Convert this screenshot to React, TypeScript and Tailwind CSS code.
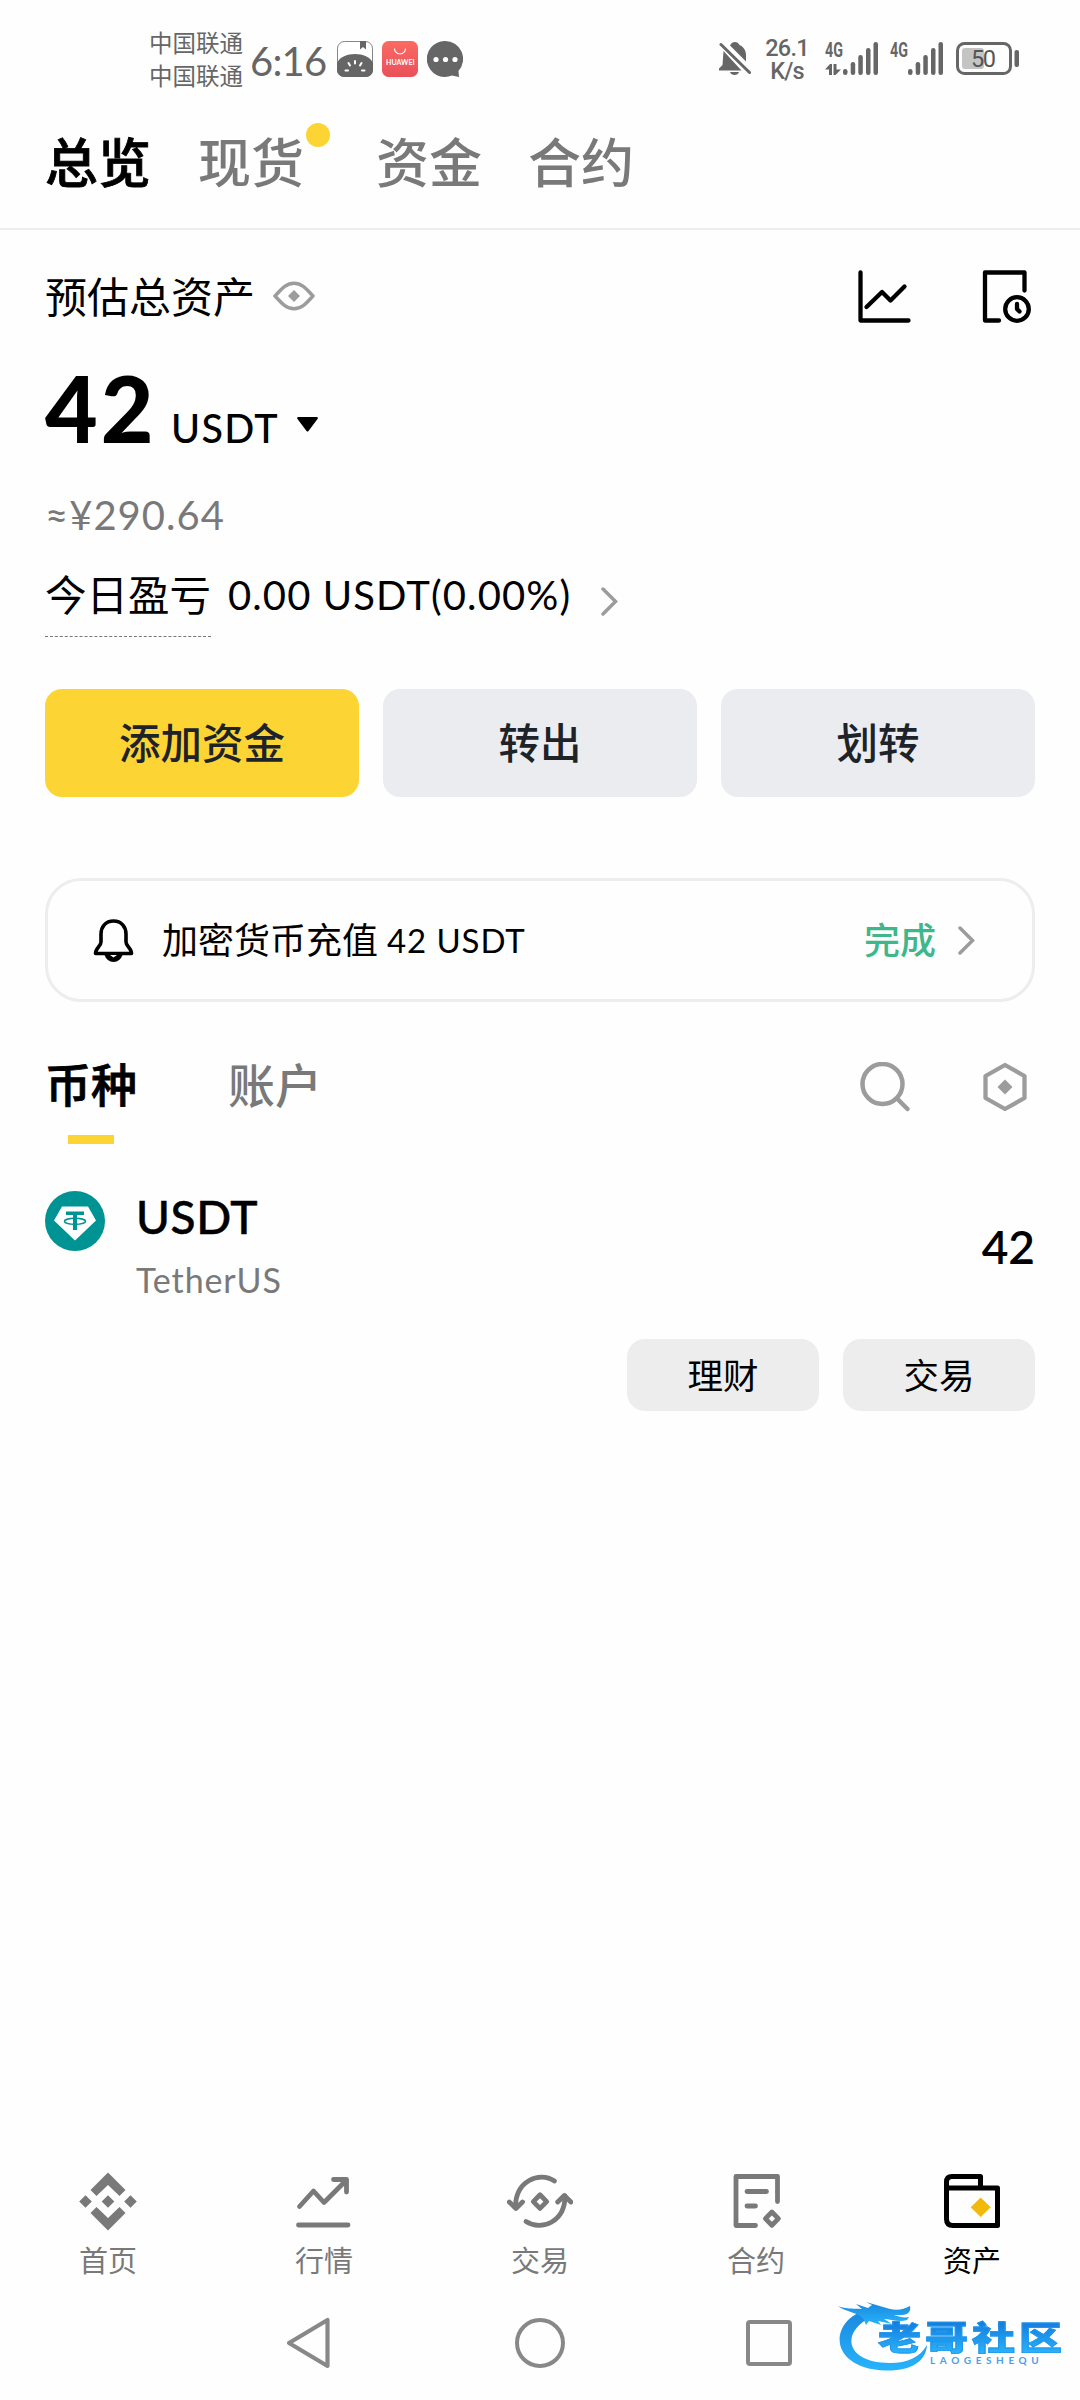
import React from "react";

type TabItem = {
  label: string;
  className: string;
  dot?: boolean;
};

type NavItem = {
  label: string;
  icon: React.ReactNode;
  active?: boolean;
};

type SignalProps = {
  transfer?: boolean;
};

const topTabs: TabItem[] = [
  { label: "总览", className: "text-black font-medium [-webkit-text-stroke:0.8px_#000]" },
  { label: "现货", className: "ml-[47px] text-[#797979] font-medium", dot: true },
  { label: "资金", className: "ml-[72px] text-[#797979] font-medium" },
  { label: "合约", className: "ml-[46px] text-[#797979] font-medium" },
];

const Signal = ({ transfer }: SignalProps) => (
  <svg className="overflow-visible" width="53" height="33" viewBox="0 0 53 33" fill="#666">
    <text
      x="0"
      y="15"
      fontSize="20"
      fontWeight="700"
      fontFamily="Roboto, sans-serif"
      textLength="18"
      lengthAdjust="spacingAndGlyphs"
    >
      4G
    </text>
    {transfer && (
      <path d="M0 27.500 L5 22 H7 V33 H4 V27.500 Z M8.500 22 H11.500 V27.500 H16 L10.500 33 H8.500 Z" />
    )}
    <rect x="18" y="27" width="4.500" height="6" rx="2.200" />
    <rect x="25.700" y="20" width="4.500" height="13" rx="2.200" />
    <rect x="33.300" y="13" width="4.500" height="20" rx="2.200" />
    <rect x="41" y="6" width="4.500" height="27" rx="2.200" />
    <rect x="48.500" y="0" width="4.500" height="33" rx="2.200" />
  </svg>
);

const StatusBar = () => (
  <div className="flex h-[115px] pl-[149px] text-[#666]">
    <div className="pt-[27px] text-[23.5px] leading-[33px]">
      <div>中国联通</div>
      <div>中国联通</div>
    </div>
    <div className="ml-[7px] w-[80px] pt-[41px] text-[40px] leading-[40px] tracking-[-0.800px]">
      6:16
    </div>
    <div className="mt-[41px] ml-[7px] flex gap-[9px]">
      {/* Reader app */}
      <svg width="36" height="36" viewBox="0 0 36 36">
        <rect x="0.500" y="0.500" width="35" height="35" rx="7" fill="#fff" stroke="#777" strokeWidth="0.900" />
        <path d="M23 0 H29 V8.500 L26 6 L23 8.500 Z" fill="#666" />
        <path d="M0 22 C5 10 31 10 36 22 V29 A7 7 0 0 1 29 36 H7 A7 7 0 0 1 0 29 Z" fill="#666" />
        <path
          d="M18 20 V22.500 M11.500 22 L13 24.500 M24.500 22 L23 24.500 M8.500 29.500 H11 M25 29.500 H27.500"
          stroke="#fff"
          strokeWidth="2"
          strokeLinecap="round"
        />
      </svg>
      {/* Huawei store */}
      <svg width="36" height="36" viewBox="0 0 36 36">
        <defs>
          <linearGradient id="store" x1="0" y1="0" x2="0" y2="1">
            <stop offset="0" stopColor="#fb6a62" />
            <stop offset="1" stopColor="#e9505a" />
          </linearGradient>
        </defs>
        <rect width="36" height="36" rx="6.500" fill="url(#store)" />
        <path d="M12.500 7.500 A5.500 5.500 0 0 0 23.500 7.500" fill="none" stroke="#fff" strokeWidth="1.200" />
        <text
          x="4"
          y="24"
          fill="#fff"
          fontSize="7"
          fontWeight="700"
          fontFamily="Lato, sans-serif"
          textLength="28.500"
        >
          HUAWEI
        </text>
      </svg>
      {/* Messages */}
      <svg width="36" height="36" viewBox="0 0 36 36">
        <path d="M18 0 A18 18 0 1 0 25 34.500 L32 36 L31.500 30 A18 18 0 0 0 18 0 Z" fill="#666" />
        <circle cx="9" cy="18.500" r="2.600" fill="#fff" />
        <circle cx="18.500" cy="18.500" r="2.600" fill="#fff" />
        <circle cx="28" cy="18.500" r="2.600" fill="#fff" />
      </svg>
    </div>
    <div className="mr-[61px] ml-auto flex pt-[42px]">
      <svg width="32" height="33" viewBox="0 0 32 33" fill="#666">
        <path d="M11 3.500 C12 1 14 0 16 0 C18 0 19.500 1 20.500 3 C25 5 27 9 27 13 V19.500 Z" />
        <path d="M4.500 9 L22.500 28.500 H0 V26.500 L3.500 23 Z" />
        <path d="M11 30 H20 C19 34 12 34 11 30 Z" />
        <path d="M2 2.500 L30.500 30.500" stroke="#666" strokeWidth="3" strokeLinecap="round" />
      </svg>
      <div className="-mt-[5px] ml-[12px] w-[48px] text-center font-['Roboto',sans-serif] text-[23.500px] leading-[23px] font-medium tracking-[-0.800px]">
        <div>26.1</div>
        <div>K/s</div>
      </div>
      <div className="ml-[14px]">
        <Signal transfer />
      </div>
      <div className="ml-[12px]">
        <Signal />
      </div>
      <svg className="ml-[13px]" width="63" height="33" viewBox="0 0 63 33">
        <rect x="6" y="6" width="22" height="21" rx="3" fill="#c4c4c4" />
        <rect x="1.500" y="1.500" width="53" height="30" rx="7" fill="none" stroke="#666" strokeWidth="3" />
        <rect x="58.500" y="8" width="4.500" height="17" rx="2" fill="#666" />
        <text x="15" y="25" fill="#555" fontSize="23.500" fontFamily="Roboto, sans-serif" textLength="25">
          50
        </text>
      </svg>
    </div>
  </div>
);

const Chevron = ({ className }: { className?: string }) => (
  <svg className={className} width="17" height="29" viewBox="0 0 17 29" fill="none">
    <path d="M2 2 L14.500 14.500 L2 27" stroke="#9c9c9c" strokeWidth="3.500" strokeLinecap="round" />
  </svg>
);

const Overview = () => (
  <>
    <div className="flex h-[132px] items-center">
      <span className="w-[208px] pt-[1px] text-[42px] leading-none whitespace-nowrap">预估总资产</span>
      <svg className="ml-[20px]" width="42" height="30" viewBox="0 0 42 30" fill="none">
        <path
          d="M2 15 C7 10 12 2.200 21 2.200 C30 2.200 35 10 40 15 C35 20 30 27.800 21 27.800 C12 27.800 7 20 2 15 Z"
          stroke="#9c9c9c"
          strokeWidth="3.500"
          strokeLinejoin="round"
        />
        <path d="M21 9 L27 15 L21 21 L15 15 Z" fill="#9c9c9c" />
      </svg>
      <svg className="ml-auto" width="53" height="53" viewBox="0 0 53 53" fill="none" stroke="#000" strokeWidth="4.300" strokeLinecap="round" strokeLinejoin="round">
        <path d="M2.500 2.500 V50.500 H50.500" />
        <path d="M8.500 37 L24 22 L32.500 30.500 L46.500 16.500" />
      </svg>
      <svg className="mr-[3px] ml-[71px]" width="50" height="53" viewBox="0 0 50 53" fill="none" stroke="#000" strokeWidth="4.300" strokeLinecap="round" strokeLinejoin="round">
        <path d="M42.500 20.500 V2.500 H3 V50.500 H17" />
        <circle cx="35" cy="39" r="11.800" />
        <path d="M35 34 V39 L37.500 41.500" />
      </svg>
    </div>

    <div className="flex items-baseline leading-none">
      <span className="w-[106px] text-[91px] font-black tracking-[3px] whitespace-nowrap">42</span>
      <span className="ml-[18px] w-[108px] pl-[2px] text-[39.500px] font-medium tracking-[1.300px]">USDT</span>
      <svg className="ml-[20px] -translate-y-[11px]" width="21" height="15" viewBox="0 0 21 15">
        <path d="M1 0 H20 Q21.500 0.500 20.500 2 L11.500 14 Q10.500 15 9.500 14 L0.500 2 Q-0.500 0.500 1 0 Z" />
      </svg>
    </div>

    <div className="mt-[42px] text-[40px] leading-[40px] tracking-[1px] text-[#797979]">≈¥290.64</div>

    <div className="mt-[38px] flex h-[64px] text-[41.500px] leading-[45px]">
      <span className="h-[64px] border-b border-dashed border-[#777]">今日盈亏</span>
      <span className="ml-[17px] text-[40px] tracking-[1.100px]">0.00 USDT(0.00%)</span>
      <Chevron className="mt-[14px] ml-[30px]" />
    </div>
  </>
);

const Actions = () => (
  <div className="mt-[52px] grid grid-cols-3 gap-[24px] text-[41.500px] font-medium text-[#1e2329]">
    <button className="h-[108px] rounded-[17px] bg-[#fcd535]">添加资金</button>
    <button className="h-[108px] rounded-[17px] bg-[#eaecef]">转出</button>
    <button className="h-[108px] rounded-[17px] bg-[#eaecef]">划转</button>
  </div>
);

const Notice = () => (
  <div className="mt-[81px] flex h-[124px] items-center rounded-[36px] border-[3px] border-[#ededed] pr-[57px] pl-[45px]">
    <svg width="41" height="43" viewBox="0 0 41 43" fill="none">
      <path
        d="M20.500 2 C12.500 2 8 8 8 15 V23 C8 27 2.500 29 2.500 34.500 H38.500 C38.500 29 33 27 33 23 V15 C33 8 28.500 2 20.500 2 Z"
        stroke="#000"
        strokeWidth="3.600"
        strokeLinejoin="round"
      />
      <path d="M11 35 H30 Q27 43 20.500 43 Q14 43 11 35 Z" fill="#000" />
      <path d="M17 36 H24 L20.500 38.500 Z" fill="#fff" />
    </svg>
    <span className="ml-[28px] text-[36px] leading-none">加密货币充值</span>
    <span className="ml-[9px] text-[33px] leading-none tracking-[0.900px]">42 USDT</span>
    <span className="ml-auto text-[36px] leading-none font-medium text-[#3eb88a]">完成</span>
    <Chevron className="ml-[22px]" />
  </div>
);

const AssetTabs = () => (
  <div className="flex h-[142px] pt-[60px] text-[46px] leading-[46px]">
    <div className="flex flex-col items-center">
      <span className="font-medium [-webkit-text-stroke:0.8px_#000]">币种</span>
      <div className="mt-[27px] h-[9px] w-[46px] bg-[#fcd535]" />
    </div>
    <span className="ml-[91px] text-[47px] font-medium text-[#797979]">账户</span>
    <svg className="ml-auto" width="51" height="51" viewBox="0 0 51 51" fill="none" stroke="#9c9c9c" strokeWidth="4.500" strokeLinecap="round">
      <circle cx="22.500" cy="22" r="20" />
      <path d="M37 36.500 L47.500 47" />
    </svg>
    <svg className="mr-[7px] ml-[71px]" width="46" height="51" viewBox="0 0 46 51" fill="none">
      <path d="M23 3 L42.500 14 V36 L23 47 L3.500 36 V14 Z" stroke="#9c9c9c" strokeWidth="4.300" strokeLinejoin="round" />
      <path d="M23 17.500 L30.500 25 L23 32.500 L15.500 25 Z" fill="#9c9c9c" />
    </svg>
  </div>
);

const AssetRow = () => (
  <div>
    <div className="mt-[47px] flex h-[148px]">
      <svg width="60" height="60" viewBox="0 0 60 60">
        <circle cx="30" cy="30" r="30" fill="#009393" />
        <path d="M17 15.500 H43 L51 29.500 L30 49.500 L9 29.500 Z" fill="#fff" />
        <path d="M21 20.500 H39 V24 H32 V39 H28 V24 H21 Z" fill="#009393" />
        <ellipse cx="30" cy="30.300" rx="10.500" ry="3" fill="none" stroke="#009393" strokeWidth="1.500" />
      </svg>
      <div className="ml-[31px] pt-[3px]">
        <div className="text-[46px] leading-[46px] font-medium tracking-[0.600px] [-webkit-text-stroke:0.5px_#000]">
          USDT
        </div>
        <div className="mt-[23px] text-[34px] leading-[33px] tracking-[0.900px] text-[#797979]">TetherUS</div>
      </div>
      <div className="mt-[33px] ml-auto text-[46px] leading-[45px] font-semibold">42</div>
    </div>
    <div className="flex justify-end gap-[24px] text-[35.500px]">
      <button className="h-[72px] w-[192px] rounded-[18px] bg-[#ededed] pt-[1px]">理财</button>
      <button className="h-[72px] w-[192px] rounded-[18px] bg-[#ededed] pt-[1px]">交易</button>
    </div>
  </div>
);

const navItems: NavItem[] = [
  {
    label: "首页",
    icon: (
      <svg width="66" height="60" viewBox="0 0 66 60" fill="#797979">
        <path d="M33 1.500 L50.500 19 L44.500 25 L33 14 L21.500 25 L15.500 19 Z" />
        <path d="M33 59.500 L50.500 42 L44.500 36 L33 47 L21.500 36 L15.500 42 Z" />
        <path d="M33 24.300 L39.300 30.600 L33 36.800 L26.700 30.600 Z M10.500 24.300 L16.800 30.600 L10.500 36.800 L4.200 30.600 Z M55.500 24.300 L61.800 30.600 L55.500 36.800 L49.200 30.600 Z" />
      </svg>
    ),
  },
  {
    label: "行情",
    icon: (
      <svg width="66" height="60" viewBox="0 0 66 60" fill="none" stroke="#797979" strokeWidth="4.800" strokeLinecap="round" strokeLinejoin="round">
        <path d="M8.500 35.500 L22.500 20 L33 31.500 L55 9.500" />
        <path d="M42.500 8.500 H55.500 V21" />
        <path d="M7.500 54 H57" />
      </svg>
    ),
  },
  {
    label: "交易",
    icon: (
      <svg width="66" height="60" viewBox="0 0 66 60" fill="none" stroke="#797979" strokeWidth="4.800" strokeLinecap="round" strokeLinejoin="round">
        <path d="M47.500 10 C32 0 8.500 10 8.500 36" />
        <path d="M2.300 31 L8.900 37.500 L15.500 31" />
        <path d="M19 50.500 C34.500 60.500 58 51 58 25" />
        <path d="M50.700 31 L57.300 24.500 L63.900 31" />
        <path d="M33 23.800 L39.700 30.600 L33 37.400 L26.300 30.600 Z" />
      </svg>
    ),
  },
  {
    label: "合约",
    icon: (
      <svg width="66" height="60" viewBox="0 0 66 60" fill="none" stroke="#797979" strokeWidth="4.800" strokeLinecap="round" strokeLinejoin="round">
        <path d="M54.500 30.500 V5.500 H13 V54.500 H32.500" />
        <path d="M24 20.500 H43.500 M24 35 H32.500" />
        <path d="M48.900 41 L55.400 47.600 L48.900 54.200 L42.400 47.600 Z" />
      </svg>
    ),
  },
  {
    label: "资产",
    active: true,
    icon: (
      <svg width="66" height="60" viewBox="0 0 66 60" fill="none" stroke="#000" strokeWidth="5" strokeLinejoin="round">
        <path d="M7.500 16.500 V11 Q7.500 5.500 13 5.500 H41.500 V16.500" />
        <path d="M7.500 11 V48 Q7.500 54.500 14 54.500 H58.500 V17 H7.500" />
        <path d="M41.700 26.500 L51.700 36.200 L41.700 46 L31.700 36.200 Z" fill="#f0b90b" stroke="none" />
      </svg>
    ),
  },
];

const BottomNav = () => (
  <div className="mt-auto grid h-[115px] grid-cols-5">
    {navItems.map((item) => (
      <div key={item.label} className="flex flex-col items-center">
        {item.icon}
        <span
          className={
            item.active
              ? "mt-[15px] text-[29px] leading-[29px] text-black"
              : "mt-[15px] text-[29px] leading-[29px] text-[#797979]"
          }
        >
          {item.label}
        </span>
      </div>
    ))}
  </div>
);

const SystemNav = () => (
  <div className="flex h-[114px] items-center pl-[286px]">
    <svg width="46" height="52" viewBox="0 0 46 52" fill="none">
      <path d="M41.500 3 V49 L3 26 Z" stroke="#888" strokeWidth="4.200" strokeLinejoin="round" />
    </svg>
    <div className="ml-[183px] h-[50px] w-[50px] rounded-full border-[4px] border-[#888]" />
    <div className="ml-[181px] h-[46px] w-[46px] rounded-[4px] border-[4px] border-[#888]" />
  </div>
);

// Community logo floating above the system keys
const Watermark = () => (
  <div className="absolute top-[2295px] left-[836px] h-[80px] w-[230px]">
    <svg className="absolute inset-0" width="230" height="80" viewBox="0 0 230 80">
      <defs>
        <linearGradient id="dragon" x1="0" y1="0" x2="0" y2="1">
          <stop offset="0" stopColor="#1a86de" />
          <stop offset="1" stopColor="#27b4fb" />
        </linearGradient>
      </defs>
      <g fill="url(#dragon)">
        <path d="M30 15 C-8 26 -8 74 50 75.500 C76 76 90 66 91 50 C84 62 72 68 54 68 C8 68 4 36 37 21 Z" />
        <path d="M2 11 C12 15 20 13 26 14 L20 9 L32 13 L36 10 L30 7 C38 9 46 12 54 14 C62 16 68 14 74 11 C75 16 73 19 67 20 L58 20 C64 22 68 23 73 22 L71 25 C63 28 54 24 48 24 L56 29 L42 26 L45 30 L33 26 L30 30 L27 23 C20 17 8 16 2 11 Z" />
      </g>
    </svg>
    <div className="absolute top-[25px] left-[42px] origin-top scale-y-[0.760] bg-gradient-to-b from-[#1478dc] to-[#2bb6fb] bg-clip-text text-[43px] leading-[46px] font-black tracking-[4px] whitespace-nowrap text-transparent [-webkit-text-stroke:1px_#2196ec]">
      老哥社区
    </div>
    <div className="absolute top-[60px] left-[94px] text-[10px] leading-[10px] font-bold tracking-[4.600px] text-[#4a9fe6]">
      LAOGESHEQU
    </div>
  </div>
);

export default function App() {
  return (
    <div className="relative flex h-[2400px] w-[1080px] flex-col overflow-hidden bg-[#fefefe] font-['Lato','Noto_Sans_CJK_SC',sans-serif] text-black">
      <StatusBar />

      <div className="flex h-[115px] border-b-2 border-[#ededed] pt-[22px] pl-[45px] text-[53px] leading-[52px]">
        {topTabs.map((tab) => (
          <div key={tab.label} className={`relative ${tab.className}`}>
            {tab.label}
            {tab.dot && (
              <span className="absolute -top-[14px] -right-[26px] h-[24px] w-[24px] rounded-full bg-[#fcd535]" />
            )}
          </div>
        ))}
      </div>

      <div className="px-[45px]">
        <Overview />
        <Actions />
        <Notice />
        <AssetTabs />
        <AssetRow />
      </div>

      <BottomNav />
      <SystemNav />
      <Watermark />
    </div>
  );
}
